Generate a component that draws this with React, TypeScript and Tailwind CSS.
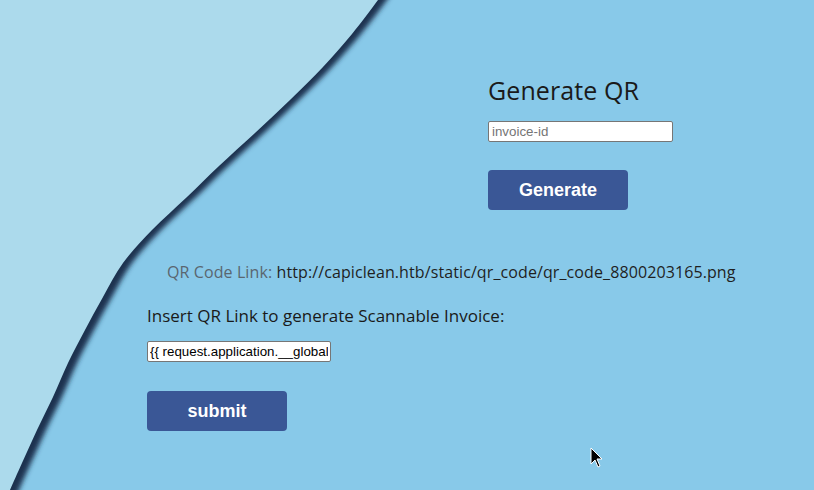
import React from "react";

const pts: [number, number][] = [
  [384, -10], [378, 0], [352, 34], [323, 67], [290, 100], [255, 133], [219, 166], [187, 197],
  [152, 230], [123, 263], [103, 297], [85, 330], [68, 363], [53, 397], [37, 430], [22, 463], [10, 490], [4, 505],
];

function curve(dx: number): string {
  const p = pts.map(([x, y]) => [x + dx, y] as [number, number]);
  let d = `M0,-10 L${p[0][0]},${p[0][1]}`;
  for (let i = 0; i < p.length - 1; i++) {
    const p0 = p[Math.max(0, i - 1)];
    const p1 = p[i];
    const p2 = p[i + 1];
    const p3 = p[Math.min(p.length - 1, i + 2)];
    const c1x = p1[0] + (p2[0] - p0[0]) / 6;
    const c1y = p1[1] + (p2[1] - p0[1]) / 6;
    const c2x = p2[0] - (p3[0] - p1[0]) / 6;
    const c2y = p2[1] - (p3[1] - p1[1]) / 6;
    d += ` C${c1x.toFixed(1)},${c1y.toFixed(1)} ${c2x.toFixed(1)},${c2y.toFixed(1)} ${p2[0]},${p2[1]}`;
  }
  d += " L0,505 Z";
  return d;
}

export default function App() {
  return (
    <div className="relative w-[814px] h-[490px] overflow-hidden bg-[#88c9e9]" style={{ fontFamily: '"Open Sans", sans-serif' }}>
      <svg className="absolute inset-0" width="814" height="490" viewBox="0 0 814 490">
        <defs>
          <filter id="blur" x="-20%" y="-20%" width="140%" height="140%">
            <feGaussianBlur stdDeviation="2.6" />
          </filter>
        </defs>
        <path d={curve(9)} fill="#1a3350" filter="url(#blur)" />
        <path d={curve(0)} fill="#acdaec" />
      </svg>

      <div className="relative flex flex-col">
        <div className="pl-[488px] pt-[75px] flex flex-col">
          <h1 className="text-[25px] leading-[31px] tracking-[0.1px] text-[#1a1a1a]">Generate QR</h1>
          <input
            className="mt-[15px] w-[185px] h-[21px] bg-white border border-[#767676] rounded-[2px] px-[3px] text-[13.33px] text-black placeholder:text-[#757575] outline-none"
            style={{ fontFamily: '"Liberation Sans", Arial, sans-serif' }}
            placeholder="invoice-id"
          />
          <button
            className="mt-[28px] w-[140px] h-[40px] rounded-[4px] bg-[#3a5796] text-white text-[18px] font-bold"
            style={{ fontFamily: '"Liberation Sans", Arial, sans-serif' }}
          >
            Generate
          </button>
        </div>

        <div className="pl-[167px] mt-[51px] text-[16px] leading-[22px] tracking-[0.1px]">
          <span className="text-[#5a6670]">QR Code Link: </span>
          <span className="text-[#1f1f1f]">http://capiclean.htb/static/qr_code/qr_code_8800203165.png</span>
        </div>

        <div className="pl-[147px] mt-[22px] flex flex-col">
          <div className="text-[17px] leading-[22px] text-[#1a1a1a]">Insert QR Link to generate Scannable Invoice:</div>
          <input
            className="mt-[14px] w-[184px] h-[21px] bg-white border border-[#767676] rounded-[2px] px-[2px] text-[13.33px] text-black outline-none"
            style={{ fontFamily: '"Liberation Sans", Arial, sans-serif' }}
            defaultValue="{{ request.application.__globals__ }}"
          />
          <button
            className="mt-[29px] w-[140px] h-[40px] rounded-[4px] bg-[#3a5796] text-white text-[18px] font-bold"
            style={{ fontFamily: '"Liberation Sans", Arial, sans-serif' }}
          >
            submit
          </button>
        </div>
      </div>

      <svg className="absolute left-[590px] top-[447px]" width="14" height="22" viewBox="0 0 14 22">
        <path d="M1,1 L1,17 L5,13 L8,20 L10,19 L7,12 L12,12 Z" fill="#000" stroke="#fff" strokeWidth="1" />
      </svg>
    </div>
  );
}
